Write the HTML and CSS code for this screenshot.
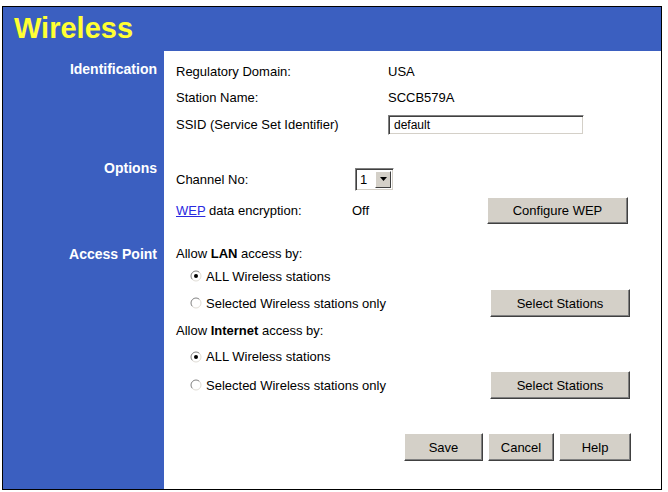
FILE: index.html
```html
<!DOCTYPE html>
<html>
<head>
<meta charset="utf-8">
<link rel="stylesheet" href="styles.css">
</head>
<body>
<div class="frame">
  <div class="header"><h1 class="title">Wireless</h1></div>
  <div class="content">
    <section class="sec sec-id">
      <div class="side">Identification</div>
      <div class="main">
        <div class="row r26"><span class="lbl">Regulatory Domain:</span><span>USA</span></div>
        <div class="row r26"><span class="lbl">Station Name:</span><span>SCCB579A</span></div>
        <div class="row r29"><span class="lbl">SSID (Service Set Identifier)</span><span class="input">default</span></div>
      </div>
    </section>
    <section class="sec sec-opt">
      <div class="side">Options</div>
      <div class="main">
        <div class="row r26"><span class="lbl lbl-ch">Channel No:</span>
          <span class="select"><span class="sel-val">1</span><span class="sel-btn"><svg width="7" height="4" viewBox="0 0 7 4"><path d="M0 0h7L3.5 4z" fill="#000"/></svg></span></span>
        </div>
        <div class="row r28 wep-row"><span class="lbl lbl-ch2"><a class="link" href="#">WEP</a> data encryption:</span><span class="off">Off</span><button class="btn btn-wep">Configure WEP</button></div>
      </div>
    </section>
    <section class="sec sec-ap">
      <div class="side">Access Point</div>
      <div class="main">
        <div class="row r22">Allow&nbsp;<b>LAN</b>&nbsp;access by:</div>
        <div class="row r24 radio-row"><span class="radio-lbl"><svg class="radio" width="12" height="12" viewBox="0 0 12 12"><circle cx="6" cy="6" r="5" fill="#fff"/><path d="M2.46 9.54A5 5 0 0 1 9.54 2.46" stroke="#808080" fill="none"/><path d="M9.54 2.46A5 5 0 0 1 2.46 9.54" stroke="#e0ddd6" fill="none"/><circle cx="6" cy="6" r="2" fill="#000"/></svg>ALL Wireless stations</span></div>
        <div class="row r30 radio-row"><span class="radio-lbl"><svg class="radio" width="12" height="12" viewBox="0 0 12 12"><circle cx="6" cy="6" r="5" fill="#fff"/><path d="M2.46 9.54A5 5 0 0 1 9.54 2.46" stroke="#808080" fill="none"/><path d="M9.54 2.46A5 5 0 0 1 2.46 9.54" stroke="#e0ddd6" fill="none"/></svg>Selected Wireless stations only</span><button class="btn btn-sel">Select Stations</button></div>
        <div class="row r24">Allow&nbsp;<b>Internet</b>&nbsp;access by:</div>
        <div class="row r29 radio-row"><span class="radio-lbl"><svg class="radio" width="12" height="12" viewBox="0 0 12 12"><circle cx="6" cy="6" r="5" fill="#fff"/><path d="M2.46 9.54A5 5 0 0 1 9.54 2.46" stroke="#808080" fill="none"/><path d="M9.54 2.46A5 5 0 0 1 2.46 9.54" stroke="#e0ddd6" fill="none"/><circle cx="6" cy="6" r="2" fill="#000"/></svg>ALL Wireless stations</span></div>
        <div class="row r28 radio-row"><span class="radio-lbl"><svg class="radio" width="12" height="12" viewBox="0 0 12 12"><circle cx="6" cy="6" r="5" fill="#fff"/><path d="M2.46 9.54A5 5 0 0 1 9.54 2.46" stroke="#808080" fill="none"/><path d="M9.54 2.46A5 5 0 0 1 2.46 9.54" stroke="#e0ddd6" fill="none"/></svg>Selected Wireless stations only</span><button class="btn btn-sel">Select Stations</button></div>
      </div>
    </section>
    <section class="sec sec-btns">
      <div class="side"></div>
      <div class="main">
        <div class="actions">
          <button class="btn btn-save">Save</button>
          <button class="btn btn-cancel">Cancel</button>
          <button class="btn btn-help">Help</button>
        </div>
      </div>
    </section>
  </div>
</div>
</body>
</html>
```
FILE: styles.css
```css
html, body {
  margin: 0;
  padding: 0;
  background: #fff;
}
body {
  font-family: "Liberation Sans", Arial, sans-serif;
  font-size: 13px;
  color: #000;
}
.frame {
  margin: 6px 0 0 2px;
  width: 658px;
  height: 482px;
  border: 1px solid #000;
  display: flex;
  flex-direction: column;
}
.header {
  background: #3b5fc0;
  height: 44px;
  flex: none;
}
.title {
  margin: 0;
  padding: 4px 0 0 11px;
  font-size: 29px;
  line-height: 34px;
  font-weight: bold;
  color: #ffff33;
}
.content {
  flex: 1;
  display: flex;
  flex-direction: column;
}
.sec {
  display: grid;
  grid-template-columns: 161px 1fr;
}
.sec-btns { flex: 1; }
.side {
  background: #3b5fc0;
  color: #fff;
  font-weight: bold;
  font-size: 14px;
  text-align: right;
  padding-right: 7px;
  line-height: 16px;
}
.main {
  padding-left: 12px;
}
.sec-id .side { padding-top: 10px; }
.sec-id .main { padding-top: 7px; }
.sec-opt .side { padding-top: 21px; }
.sec-opt .main { padding-top: 27px; }
.sec-ap .side { padding-top: 22px; }
.sec-ap .main { padding-top: 18px; }
.sec-btns .main { padding-top: 34px; }
.row {
  display: flex;
  align-items: center;
  white-space: nowrap;
}
.wep-row { margin-top: 4px; }
.r22 { height: 22px; }
.r24 { height: 24px; }
.r26 { height: 26px; }
.r28 { height: 28px; }
.r29 { height: 29px; }
.r30 { height: 30px; }
.lbl { width: 212px; flex: none; }
.lbl-ch { width: 179px; }
.lbl-ch2 { width: 176px; }
.link { color: #2a2adf; text-decoration: underline; }
.input {
  box-sizing: border-box;
  width: 196px;
  height: 20px;
  border: 1px solid;
  border-color: #808080 #fff #fff #808080;
  box-shadow: inset 1px 1px 0 #404040, inset -1px -1px 0 #d4d0c8;
  padding: 2px 5px;
  line-height: 15px;
  font-size: 12px;
}
.select {
  box-sizing: border-box;
  width: 39px;
  height: 23px;
  display: flex;
  border: 1px solid;
  border-color: #808080 #fff #fff #808080;
  box-shadow: inset 1px 1px 0 #404040, inset -1px -1px 0 #d4d0c8;
  padding: 2px;
  background: #fff;
}
.sel-val { flex: 1; padding-left: 2px; line-height: 17px; }
.sel-btn {
  box-sizing: border-box;
  width: 16px;
  background: #d4d0c8;
  border: 1px solid;
  border-color: #fff #404040 #404040 #fff;
  display: flex;
  align-items: center;
  justify-content: center;
}
.off { width: 135px; flex: none; }
.btn {
  box-sizing: border-box;
  font-family: "Liberation Sans", Arial, sans-serif;
  font-size: 13px;
  color: #000;
  background: #d4d0c8;
  border: 1px solid;
  border-color: #fff #404040 #404040 #fff;
  box-shadow: inset -1px -1px 0 #808080;
  padding: 0;
  height: 28px;
}
.btn-wep { width: 141px; height: 27px; }
.radio-row { padding-left: 14px; }
.radio-lbl {
  display: flex;
  align-items: center;
  width: 300px;
  flex: none;
}
.radio { margin-right: 4px; flex: none; }
.btn-sel { width: 140px; }
.actions {
  display: flex;
  gap: 5px;
  padding-left: 228px;
}
.btn-save { width: 79px; }
.btn-cancel { width: 66px; }
.btn-help { width: 72px; }
```
